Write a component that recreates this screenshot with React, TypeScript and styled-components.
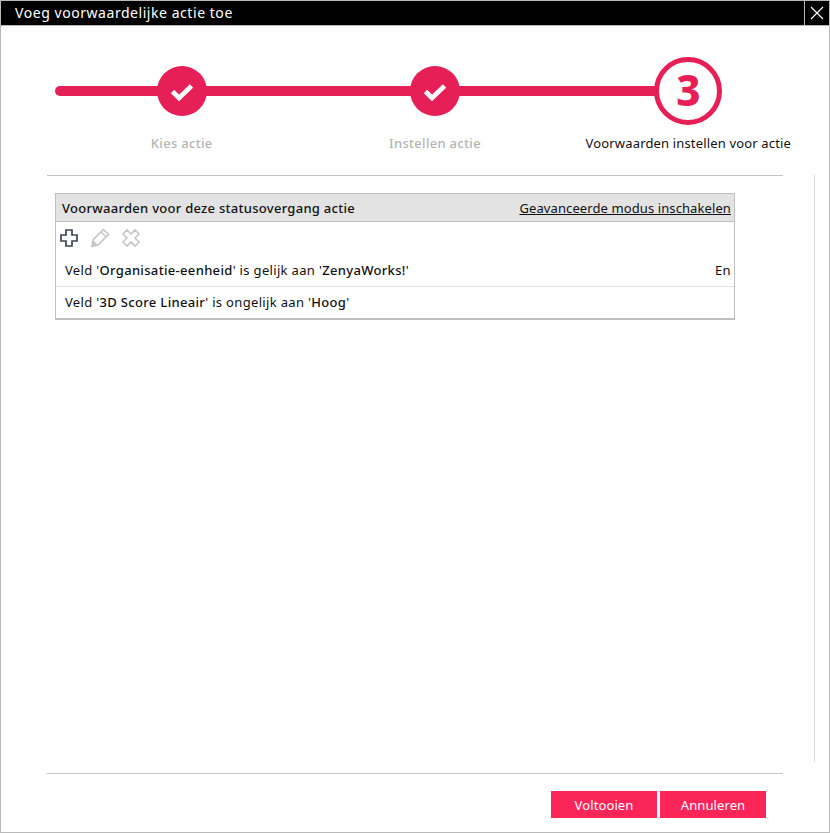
import React from 'react'
import styled, { createGlobalStyle } from 'styled-components'

const GlobalStyle = createGlobalStyle`
  html, body {
    margin: 0;
    padding: 0;
    background: #fff;
  }
  body {
    font-family: "Noto Sans", "Open Sans", sans-serif;
    font-size: 12px;
    color: #111;
  }
`

const Dialog = styled.div`
  width: 830px;
  height: 833px;
  box-sizing: border-box;
  border: 1px solid #b9b9b9;
  display: flex;
  flex-direction: column;
  background: #fff;
`

const TitleBar = styled.div`
  height: 24px;
  flex-shrink: 0;
  background: #000;
  color: #fff;
  display: flex;
  align-items: center;
  justify-content: space-between;
  border-bottom: 1px solid #b9b9b9;
`

const Title = styled.div`
  padding-left: 14px;
  font-size: 14px;
  letter-spacing: 0.55px;
  line-height: 24px;
`

const CloseButton = styled.div`
  width: 24px;
  height: 24px;
  border-left: 1px solid #b9b9b9;
  display: flex;
  align-items: center;
  justify-content: center;
`

const Stepper = styled.div`
  display: flex;
  width: 760px;
  margin: 31px 0 0 54px;
  height: 118px;
  flex-shrink: 0;
`

const Step = styled.div<{ $last?: boolean }>`
  position: relative;
  flex: 1;
  display: flex;
  flex-direction: column;
  align-items: center;

  &::before {
    content: '';
    position: absolute;
    top: 29px;
    left: 0;
    height: 10px;
    width: ${p => (p.$last ? '50%' : '100%')};
    background: #e61f56;
  }

  &:first-child::before {
    border-radius: 5px 0 0 5px;
  }
`

const StepIconArea = styled.div`
  position: relative;
  height: 68px;
  display: flex;
  align-items: center;
  justify-content: center;
`

const DoneCircle = styled.div`
  width: 50px;
  height: 50px;
  border-radius: 50%;
  background: #e61f56;
  display: flex;
  align-items: center;
  justify-content: center;
`

const CurrentCircle = styled.div`
  width: 68px;
  height: 68px;
  box-sizing: border-box;
  border: 5px solid #e61f56;
  border-radius: 50%;
  background: #fff;
  color: #e61f56;
  font-size: 42px;
  font-weight: 800;
  line-height: 56px;
  text-align: center;
`

const StepLabel = styled.div<{ $active?: boolean }>`
  margin-top: 9px;
  font-size: 13px;
  line-height: 18px;
  font-weight: ${p => (p.$active ? 400 : 500)};
  letter-spacing: ${p => (p.$active ? '0.16px' : '0.3px')};
  color: ${p => (p.$active ? '#111' : '#b4b4b4')};
  white-space: nowrap;
`

const Content = styled.div`
  flex: 1;
  width: 768px;
  margin: 0 0 11px 46px;
  box-sizing: border-box;
  display: flex;
  flex-direction: column;
  border-right: 1px solid #dcdcdc;
`

const Divider = styled.div`
  width: 736px;
  height: 1px;
  background: #c4c4c4;
  flex-shrink: 0;
`

const Panel = styled.div`
  width: 680px;
  box-sizing: border-box;
  margin: 17px 0 0 8px;
  border: 1px solid #c0c0c0;
  border-bottom-width: 2px;
`

const PanelHeader = styled.div`
  height: 28px;
  box-sizing: border-box;
  background: #e3e3e3;
  border-bottom: 1px solid #c0c0c0;
  padding: 0 3px 0 6px;
  display: flex;
  align-items: center;
  justify-content: space-between;
`

const PanelTitle = styled.div`
  font-size: 13px;
  font-weight: 500;
  letter-spacing: 0.28px;
`

const AdvancedLink = styled.a`
  font-size: 13px;
  letter-spacing: 0.1px;
  color: #111;
  text-decoration: underline;
`

const Toolbar = styled.div`
  height: 33px;
  display: flex;
  align-items: center;
  gap: 11px;
  padding: 0 0 1px 3px;
  box-sizing: border-box;
`

const ToolIcon = styled.svg`
  width: 20px;
  height: 20px;
  display: block;
`

const Row = styled.div<{ $last?: boolean }>`
  height: ${p => (p.$last ? '31px' : '32px')};
  box-sizing: border-box;
  display: flex;
  align-items: center;
  justify-content: space-between;
  padding: 0 3px 1px 9px;
  font-size: 13px;
  letter-spacing: 0.33px;
  border-bottom: ${p => (p.$last ? 'none' : '1px solid #e4e4e4')};
  b {
    font-weight: 500;
  }
`

const Spacer = styled.div`
  flex: 1;
`

const Footer = styled.div`
  height: 58px;
  flex-shrink: 0;
  margin-left: 46px;
  width: 736px;
  border-top: 1px solid #c4c4c4;
`

const FooterButtons = styled.div`
  display: flex;
  justify-content: flex-end;
  gap: 3px;
  padding-top: 17px;
  margin-right: 17px;
`

const Button = styled.button`
  width: 106px;
  height: 27px;
  border: 0;
  padding: 0;
  background: #fb2558;
  color: #fff;
  font-family: inherit;
  font-size: 13px;
  letter-spacing: 0.1px;
`

const Check = () => (
  <svg width="24" height="24" viewBox="0 0 24 24">
    <path d="M2.5 12.5 L9 19 L21.5 7" fill="none" stroke="#fff" strokeWidth="4.6" />
  </svg>
)

export default function App() {
  return (
    <Dialog>
      <GlobalStyle />
      <TitleBar>
        <Title>Voeg voorwaardelijke actie toe</Title>
        <CloseButton>
          <svg width="14" height="14" viewBox="0 0 14 14">
            <path d="M1 1 L13 13 M13 1 L1 13" stroke="#fff" strokeWidth="1.2" />
          </svg>
        </CloseButton>
      </TitleBar>
      <Stepper>
        <Step>
          <StepIconArea>
            <DoneCircle><Check /></DoneCircle>
          </StepIconArea>
          <StepLabel>Kies actie</StepLabel>
        </Step>
        <Step>
          <StepIconArea>
            <DoneCircle><Check /></DoneCircle>
          </StepIconArea>
          <StepLabel>Instellen actie</StepLabel>
        </Step>
        <Step $last>
          <StepIconArea>
            <CurrentCircle>3</CurrentCircle>
          </StepIconArea>
          <StepLabel $active>Voorwaarden instellen voor actie</StepLabel>
        </Step>
      </Stepper>
      <Content>
        <Divider />
        <Panel>
          <PanelHeader>
            <PanelTitle>Voorwaarden voor deze statusovergang actie</PanelTitle>
            <AdvancedLink>Geavanceerde modus inschakelen</AdvancedLink>
          </PanelHeader>
          <Toolbar>
            <ToolIcon viewBox="0 0 20 20">
              <path d="M7 2 H13 V7 H18 V13 H13 V18 H7 V13 H2 V7 H7 Z" fill="#fff" stroke="#3b4654" strokeWidth="1.7" />
            </ToolIcon>
            <ToolIcon viewBox="0 0 20 20">
              <path d="M13.5 1.5 L18.5 6.5 L8 17 L2 18.5 L3 12 Z" fill="#fff" stroke="#c6c6c6" strokeWidth="1.6" />
              <path d="M3 12 L8 17 L2 18.5 Z" fill="#c6c6c6" />
              <path d="M11 4 L16 9" stroke="#c6c6c6" strokeWidth="1.2" />
            </ToolIcon>
            <ToolIcon viewBox="0 0 20 20">
              <path d="M6 2 L10 6 L14 2 L18 6 L14 10 L18 14 L14 18 L10 14 L6 18 L2 14 L6 10 L2 6 Z" fill="#fff" stroke="#c6c6c6" strokeWidth="1.6" />
            </ToolIcon>
          </Toolbar>
          <Row>
            <span>Veld '<b>Organisatie-eenheid</b>' is gelijk aan '<b>ZenyaWorks!</b>'</span>
            <span>En</span>
          </Row>
          <Row $last>
            <span>Veld '<b>3D Score Lineair</b>' is ongelijk aan '<b>Hoog</b>'</span>
          </Row>
        </Panel>
        <Spacer />
      </Content>
      <Footer>
        <FooterButtons>
          <Button>Voltooien</Button>
          <Button>Annuleren</Button>
        </FooterButtons>
      </Footer>
    </Dialog>
  )
}
